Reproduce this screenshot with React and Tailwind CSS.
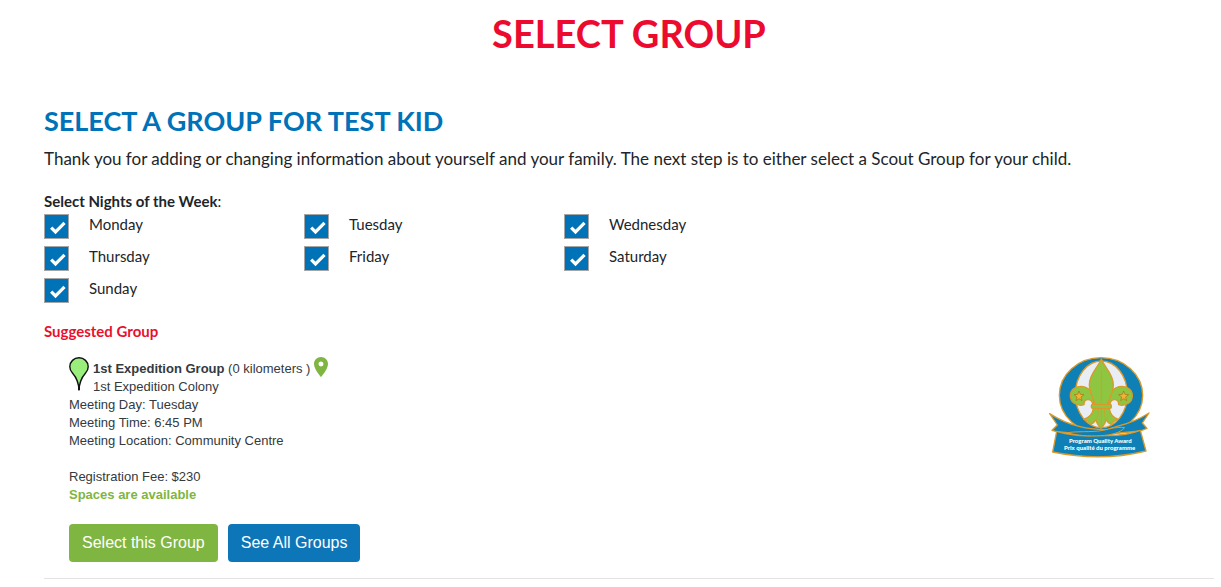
import * as React from 'react';

const NIGHTS = [
  'Monday',
  'Tuesday',
  'Wednesday',
  'Thursday',
  'Friday',
  'Saturday',
  'Sunday',
];

function NightCheckbox(props) {
  const id = `night-${props.name.toLowerCase()}`;
  return (
    <div className="flex items-start">
      <span className="grid h-[25px] w-[25px] shrink-0">
        <input
          id={id}
          type="checkbox"
          defaultChecked
          className="peer col-start-1 row-start-1 h-[25px] w-[25px] appearance-none border border-[#a6a6a6] bg-white checked:bg-[#0072b8]"
        />
        <svg
          viewBox="0 0 25 25"
          className="pointer-events-none invisible col-start-1 row-start-1 h-[25px] w-[25px] peer-checked:visible"
          fill="none"
          stroke="#fff"
          strokeWidth="3.2"
          aria-hidden="true"
        >
          <path d="M7.2 13.6l4.3 4.3 9-9" />
        </svg>
      </span>
      <label htmlFor={id} className="pl-5 text-[15px] leading-5">
        {props.name}
      </label>
    </div>
  );
}

function BalloonMarker() {
  return (
    <svg
      viewBox="0 0 20 34"
      className="h-[34px] w-5 shrink-0"
      fill="#99ee7c"
      stroke="#111"
      strokeWidth="1.4"
      aria-hidden="true"
    >
      <path d="M10 33.5C9.800 25 7 20 3.600 16.200 1.600 14 .8 12 .8 9.700.8 4.700 4.900.8 10 .8s9.200 3.900 9.200 8.900c0 2.300-.8 4.300-2.800 6.500C13 20 10.200 25 10 33.500z" />
      <path d="M10 28v5" strokeWidth="2" />
    </svg>
  );
}

function PinIcon() {
  return (
    <svg
      viewBox="5 2 14 20"
      className="mb-1 h-5 w-[14px] shrink-0"
      fill="#7fb541"
      aria-hidden="true"
    >
      <path d="M12 2C8.130 2 5 5.130 5 9c0 5.250 7 13 7 13s7-7.750 7-13c0-3.870-3.130-7-7-7zm0 9.500a2.500 2.500 0 0 1 0-5 2.500 2.500 0 0 1 0 5z" />
    </svg>
  );
}

function QualityBadge() {
  return (
    <svg
      viewBox="27 20 303 303"
      className="h-[101px] w-[101px] shrink-0"
      stroke="#d99a2b"
      strokeWidth="4"
      strokeLinejoin="round"
      role="img"
      aria-label="Program Quality Award"
    >
      <ellipse cx="183" cy="135" rx="125" ry="113" fill="#0f80b5" />
      <ellipse cx="184" cy="132" rx="78" ry="100" fill="#e9eef5" />
      {/* ribbon tails */}
      <path
        d="M29 190c26 17 54 30 88 38 30 8 62 10 92 10l-30 18-129-12-14-4 16-16z"
        fill="#0f80b5"
      />
      <path
        d="M327 188c-30 19-62 32-96 40-20 5-36 10-52 26l122-12 20-8-14-16z"
        fill="#0f80b5"
      />
      {/* fleur-de-lis */}
      <g fill="#8fc641">
        <path d="M160 174c-2 18-14 28-29 33 10 3 17 8 22 15 7-3 12-9 15-15 1 10 6 18 15 27 9-9 14-17 15-27 3 6 8 12 15 15 5-7 12-12 22-15-15-5-25-15-27-33z" />
        <path d="M158 164c0-10-6-16-14-16-7 0-12 6-12 15-20 6-41-6-41-27 0-16 13-28 31-28 23 0 38 16 41 54z" />
        <path d="M210 164c0-10 6-16 14-16 7 0 12 6 12 15 20 6 41-6 41-27 0-16-13-28-31-28-23 0-38 16-41 54z" />
        <path d="M184 26c-7 22-36 43-36 77 0 22 11 39 18 60h36c7-21 18-38 18-60 0-34-29-55-36-77z" />
        <path d="M184 60v102" fill="none" strokeWidth="3" />
        <rect x="154" y="162" width="60" height="12" rx="4" />
        <path
          d="M184 176v50M174 176c1 14 0 23-3 31M194 176c-1 14 0 23 3 31"
          fill="none"
          strokeWidth="2"
        />
      </g>
      <g fill="#f4b233" stroke="#a66f18" strokeWidth="2">
        <path d="M117 122l4 10 11 1-9 7 3 11-9-6-9 6 3-11-9-7 11-1z" />
        <path d="M251 122l4 10 11 1-9 7 3 11-9-6-9 6 3-11-9-7 11-1z" />
      </g>
      {/* ribbon front */}
      <path
        d="M50 243c45 14 88 15 130 12 45 2 85-1 121-15l17 62c-90 22-190 22-280 3z"
        fill="#0f80b5"
      />
      <path
        d="M82 247c44-6 86 1 124-11 20-5 36-6 48-4-14 16-40 22-72 24-36 2-70 0-100-9z"
        fill="#0f80b5"
        strokeWidth="3"
      />
      <g
        fill="#fff"
        stroke="none"
        textAnchor="middle"
        className="font-[Lato,sans-serif] text-[18px] font-black"
      >
        <text x="181" y="279">
          Program Quality Award
        </text>
        <text x="179" y="298">
          Prix qualité du programme
        </text>
      </g>
    </svg>
  );
}

function SuggestedGroup() {
  return (
    <section>
      <h3 className="text-[15px] leading-6 font-bold text-[#e8112d]">
        Suggested Group
      </h3>
      <div className="mt-[14px] flex items-start justify-between pr-16 pl-[25px]">
        <div className="font-['Liberation_Sans',Arial,sans-serif] text-[13px] leading-[18px] text-[#333a40]">
          <div className="flex">
            <BalloonMarker />
            <div className="pt-[3px] pl-1">
              <div className="flex h-[18px] items-center whitespace-pre">
                <strong>1st Expedition Group</strong>
                <span> (0 kilometers ) </span>
                <PinIcon />
              </div>
              <p>1st Expedition Colony</p>
            </div>
          </div>
          <p>Meeting Day: Tuesday</p>
          <p>Meeting Time: 6:45 PM</p>
          <p>Meeting Location: Community Centre</p>
          <p className="mt-[18px]">Registration Fee: $230</p>
          <p className="font-bold text-[#7fb541]">Spaces are available</p>
          <div className="mt-5 flex gap-[10px] text-base leading-6 text-white">
            <button
              type="button"
              className="rounded bg-[#7fb541] px-[13px] py-[7px]"
            >
              Select this Group
            </button>
            <button
              type="button"
              className="rounded bg-[#0d76b8] px-[13px] py-[7px]"
            >
              See All Groups
            </button>
          </div>
        </div>
        <QualityBadge />
      </div>
    </section>
  );
}

export default function App() {
  return (
    <main className="bg-white pr-[7px] pl-11 font-[Lato,sans-serif] text-[#212529]">
      <h1 className="pt-[9px] text-center text-[38px] leading-[48px] font-bold text-[#ed0a2f]">
        SELECT GROUP
      </h1>
      <h2 className="mt-11 text-[27px] leading-10 font-bold text-[#0072b8]">
        SELECT A GROUP FOR TEST KID
      </h2>
      <p className="mt-1 text-[17px] leading-7">
        Thank you for adding or changing information about yourself and your
        family. The next step is to either select a Scout Group for your child.
      </p>
      <fieldset className="mt-4">
        <legend className="pb-px text-[15px] leading-6">
          <b>Select Nights of the Week</b>:
        </legend>
        <div className="grid max-w-[780px] grid-cols-3 gap-y-[7px]">
          {NIGHTS.map((name) => (
            <NightCheckbox key={name} name={name} />
          ))}
        </div>
      </fieldset>
      <div className="mt-4">
        <SuggestedGroup />
      </div>
      <hr className="mt-4 border-[#e3e3e3]" />
    </main>
  );
}
